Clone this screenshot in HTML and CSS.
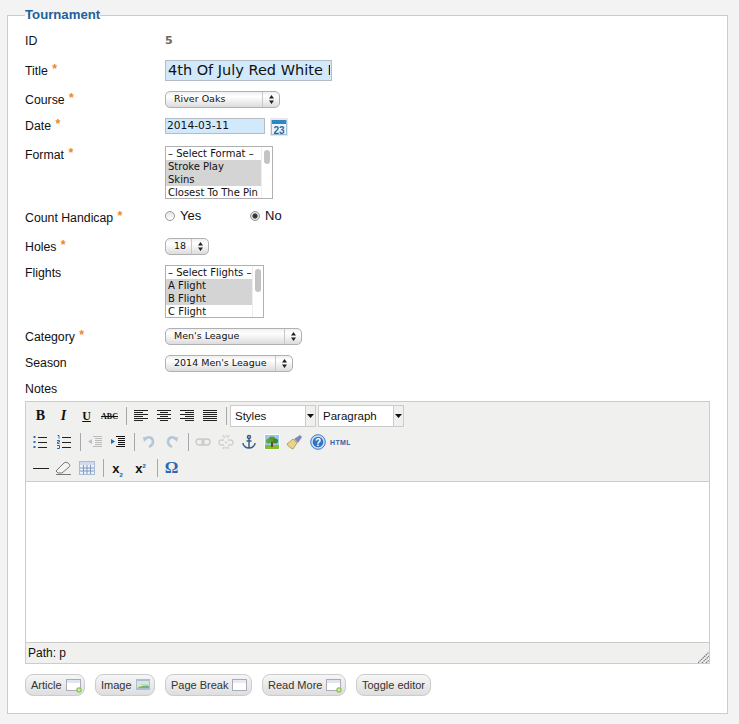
FILE: index.html
```html
<!DOCTYPE html>
<html lang="en">
<head>
<meta charset="utf-8">
<title>Tournament</title>
<link rel="stylesheet" href="styles.css">
</head>
<body>
<svg class="defs" width="0" height="0" aria-hidden="true">
  <symbol id="alignl" viewBox="0 0 16 16"><path d="M1 2.500h14M1 4.500h9M1 6.500h14M1 8.500h9M1 10.500h14M1 12.500h9" stroke="#222" fill="none" stroke-width="1"/></symbol>
  <symbol id="alignc" viewBox="0 0 16 16"><path d="M1 2.500h14M4 4.500h8M1 6.500h14M4 8.500h8M1 10.500h14M4 12.500h8" stroke="#222" fill="none"/></symbol>
  <symbol id="alignr" viewBox="0 0 16 16"><path d="M1 2.500h14M6 4.500h9M1 6.500h14M6 8.500h9M1 10.500h14M6 12.500h9" stroke="#222" fill="none"/></symbol>
  <symbol id="alignf" viewBox="0 0 16 16"><path d="M1 2.500h14M1 4.500h14M1 6.500h14M1 8.500h14M1 10.500h14M1 12.500h14" stroke="#222" fill="none"/></symbol>
  <symbol id="arrow" viewBox="0 0 7 4"><path d="M0 0h7L3.500 4z" fill="#111"/></symbol>
  <symbol id="updown" viewBox="0 0 7 11"><path d="M3.500 1L6 4.500H1zM3.500 10L1 6.500h5z" fill="#222"/></symbol>
  <symbol id="doc" viewBox="0 0 16 16"><rect x=".5" y="2.500" width="14" height="11" fill="#fff" stroke="#aab"/><rect x="1" y="3" width="13" height="3" fill="#dfe6f2"/><circle cx="13" cy="13" r="2.700" fill="#8cc152"/><path d="M11.500 13h3M13 11.500v3" stroke="#e8f5d8"/></symbol>
</svg>

<fieldset class="panel">
  <legend class="panel-title">Tournament</legend>
  <div class="form">
    <div class="label">ID</div>
    <div class="value-id">5</div>

    <div class="label label-title">Title <span class="req">*</span></div>
    <div class="field"><div class="input input-title"><span class="input-title-text">4th Of July Red White Blue</span></div></div>

    <div class="label">Course <span class="req">*</span></div>
    <div class="field"><div class="select select-course"><span class="select-text">River Oaks</span><span class="select-btn"><svg width="7" height="11"><use href="#updown"/></svg></span></div></div>

    <div class="label label-flush">Date <span class="req">*</span></div>
    <div class="field date-field">
      <div class="input input-date">2014-03-11</div>
      <svg class="calendar" width="18" height="18" viewBox="0 0 18 18">
        <rect width="18" height="18" fill="#e8e8e8"/>
        <rect x="1.500" y="2.500" width="15" height="14" fill="#eef5fb" stroke="#9dbdd6"/>
        <rect x="2" y="2" width="14" height="4" fill="#2f86c4"/>
        <text x="9" y="15.500" class="calendar-text">23</text>
      </svg>
    </div>

    <div class="label">Format <span class="req">*</span></div>
    <div class="field">
      <div class="list list-format">
        <div class="options">
          <div class="opt">&#8211; Select Format &#8211;</div>
          <div class="opt opt-on">Stroke Play</div>
          <div class="opt opt-on">Skins</div>
          <div class="opt">Closest To The Pin</div>
        </div>
        <div class="scroll"><span class="thumb thumb-format"></span></div>
      </div>
    </div>

    <div class="label">Count Handicap <span class="req">*</span></div>
    <div class="field radios">
      <span class="radio-item radio-yes"><span class="radio"></span>Yes</span>
      <span class="radio-item"><span class="radio radio-on"></span>No</span>
    </div>

    <div class="label">Holes <span class="req">*</span></div>
    <div class="field"><div class="select select-holes"><span class="select-text select-text-holes">18</span><span class="select-btn"><svg width="7" height="11"><use href="#updown"/></svg></span></div></div>

    <div class="label label-flush">Flights</div>
    <div class="field">
      <div class="list list-flights">
        <div class="options">
          <div class="opt">&#8211; Select Flights &#8211;</div>
          <div class="opt opt-on">A Flight</div>
          <div class="opt opt-on">B Flight</div>
          <div class="opt">C Flight</div>
        </div>
        <div class="scroll"><span class="thumb thumb-flights"></span></div>
      </div>
    </div>

    <div class="label">Category <span class="req">*</span></div>
    <div class="field"><div class="select select-category"><span class="select-text">Men's League</span><span class="select-btn"><svg width="7" height="11"><use href="#updown"/></svg></span></div></div>

    <div class="label label-flush">Season</div>
    <div class="field"><div class="select select-season"><span class="select-text">2014 Men's League</span><span class="select-btn"><svg width="7" height="11"><use href="#updown"/></svg></span></div></div>

    <div class="label label-flush label-wide">Notes</div>
  </div>

  <div class="editor">
    <div class="toolbar">
      <div class="tb-row">
        <span class="tb"><b class="g g-b">B</b></span>
        <span class="tb"><b class="g g-i">I</b></span>
        <span class="tb"><b class="g g-u">U</b></span>
        <span class="tb"><span class="g g-abc">ABC</span></span>
        <span class="sep"></span>
        <span class="tb"><svg width="16" height="16"><use href="#alignl"/></svg></span>
        <span class="tb"><svg width="16" height="16"><use href="#alignc"/></svg></span>
        <span class="tb"><svg width="16" height="16"><use href="#alignr"/></svg></span>
        <span class="tb"><svg width="16" height="16"><use href="#alignf"/></svg></span>
        <span class="sep"></span>
        <div class="combo combo-first"><span class="combo-text">Styles</span><span class="combo-btn"><svg width="7" height="4"><use href="#arrow"/></svg></span></div>
        <div class="combo"><span class="combo-text">Paragraph</span><span class="combo-btn"><svg width="7" height="4"><use href="#arrow"/></svg></span></div>
      </div>
      <div class="tb-row">
        <span class="tb"><svg width="16" height="16" viewBox="0 0 16 16"><path d="M1.500 2v2M1.500 7v2M1.500 12v2" stroke="#2a6db5" stroke-width="2"/><path d="M5 3.500h9M5 8.500h9M5 13.500h9" stroke="#222"/></svg></span>
        <span class="tb"><svg width="16" height="16" viewBox="0 0 16 16"><path d="M1.500 1.500h1.500v3M1 6.500h2.500v1.500H1.500v1.500h2M1 11.500h2.500v3H1" stroke="#2a6db5" fill="none"/><path d="M6 3.500h9M6 8.500h9M6 13.500h9" stroke="#222"/></svg></span>
        <span class="sep"></span>
        <span class="tb"><svg width="16" height="16" viewBox="0 0 16 16"><path d="M6 2.500h9M8 4.500h7M8 6.500h7M8 8.500h7M8 10.500h7M6 12.500h9" stroke="#bbb"/><path d="M5 5v5L1 7.500z" fill="#a9c3dc"/></svg></span>
        <span class="tb"><svg width="16" height="16" viewBox="0 0 16 16"><path d="M6 2.500h9M8 4.500h7M8 6.500h7M8 8.500h7M8 10.500h7M6 12.500h9" stroke="#111"/><path d="M1 5v5l4-2.500z" fill="#1f6fb5"/></svg></span>
        <span class="sep"></span>
        <span class="tb"><svg width="16" height="16" viewBox="0 0 16 16"><path d="M4 5c3-3 8-2 8 3 0 2-2 4-4 5" stroke="#b4c6d8" stroke-width="2.500" fill="none"/><path d="M2 3l5 1-4 4z" fill="#b4c6d8"/></svg></span>
        <span class="tb"><svg width="16" height="16" viewBox="0 0 16 16"><path d="M12 5C9 2 4 3 4 8c0 2 2 4 4 5" stroke="#b4c6d8" stroke-width="2.500" fill="none"/><path d="M14 3l-5 1 4 4z" fill="#b4c6d8"/></svg></span>
        <span class="sep"></span>
        <span class="tb"><svg width="16" height="16" viewBox="0 0 16 16"><g stroke="#c8c8c8" stroke-width="1.300" fill="none"><rect x="1" y="5" width="8" height="6" rx="3"/><rect x="7" y="5" width="8" height="6" rx="3"/></g></svg></span>
        <span class="tb"><svg width="16" height="16" viewBox="0 0 16 16"><g stroke="#cfcfcf" stroke-width="1.300" fill="none"><path d="M6 6H3.500a2.500 2.500 0 000 5H6M10 6h2.500a2.500 2.500 0 010 5H10M7 8.500h2"/><path d="M5 1l1.500 3M11 1L9.500 4M5 15l1.500-2.500M11 15l-1.500-2.500M8 1v2M8 13v2"/></g></svg></span>
        <span class="tb"><svg width="16" height="16" viewBox="0 0 16 16"><g stroke="#3a5f86" fill="none" stroke-width="1.500"><circle cx="8" cy="3" r="1.500"/><path d="M8 4.500V14M5.500 7h5M2 9c0 3 3 5 6 5s6-2 6-5"/></g></svg></span>
        <span class="tb"><svg width="16" height="16" viewBox="0 0 16 16"><rect width="16" height="16" fill="#fff"/><rect x="1" y="1" width="14" height="10" fill="#9ec8ea"/><rect x="1" y="11" width="14" height="4" fill="#7dc02c"/><circle cx="8" cy="6" r="3.500" fill="#4f9a36"/><circle cx="4.500" cy="7" r="2.500" fill="#5aa83a"/><circle cx="11.500" cy="7" r="2.500" fill="#3c8a2c"/><rect x="7" y="8" width="2" height="5" fill="#6b4a1f"/></svg></span>
        <span class="tb"><svg width="17" height="16" viewBox="0 0 17 16"><path d="M1 10l6-5 4 4-4 6c-3-1-5-3-6-5z" fill="#e8d48c" stroke="#a89050" stroke-width=".8"/><path d="M8 5l6-4 2 2-4 6z" fill="#7f88b8"/></svg></span>
        <span class="tb"><svg width="16" height="16" viewBox="0 0 16 16"><circle cx="8" cy="8" r="7.300" fill="#cfe0f5" stroke="#3c78c4"/><circle cx="8" cy="8" r="5.300" fill="#2f74c8"/><text x="8" y="11.500" class="help-text">?</text></svg></span>
        <span class="tb"><span class="g g-html">HTML</span></span>
      </div>
      <div class="tb-row">
        <span class="tb"><svg width="16" height="16" viewBox="0 0 16 16"><path d="M0 8.500h16" stroke="#222"/></svg></span>
        <span class="tb"><svg width="17" height="16" viewBox="0 0 17 16"><path d="M1 11l8-8c1-1 3-1 4 0l1 1c1 1 1 2 0 3l-7 6H3z" fill="#f4f4f4" stroke="#777"/><path d="M1 14.500h15" stroke="#777"/></svg></span>
        <span class="tb"><svg width="16" height="16" viewBox="0 0 16 16"><rect x=".5" y="1.500" width="15" height="13" fill="#eef3fb" stroke="#a8bcd6"/><rect x="1" y="2" width="14" height="3" fill="#cfdcee"/><path d="M1 8h14M1 11h14M4.500 5v9M8 5v9M11.500 5v9" stroke="#7f98bc"/></svg></span>
        <span class="sep"></span>
        <span class="tb"><span class="g g-sub">x<sub class="sc">2</sub></span></span>
        <span class="tb"><span class="g g-sub">x<sup class="sc">2</sup></span></span>
        <span class="sep"></span>
        <span class="tb"><span class="g g-omega">&#937;</span></span>
      </div>
    </div>
    <div class="edit-area"></div>
    <div class="statusbar">
      <span>Path: p</span>
      <svg class="grip" width="11" height="11" viewBox="0 0 11 11"><path d="M0 11L11 0M4 11l7-7M8 11l3-3" stroke="#777" stroke-width="1.200" stroke-dasharray="1.500 .7"/></svg>
    </div>
  </div>

  <div class="actions">
    <a class="btn btn-article">Article <svg class="btn-icon" width="16" height="16"><use href="#doc"/></svg></a>
    <a class="btn btn-image">Image <svg class="btn-icon" width="16" height="16" viewBox="0 0 16 16"><rect y="2" width="14" height="11" fill="#a9bfd2"/><rect x="1" y="4" width="12" height="7" fill="#cfe6f4"/><path d="M1 11l5-4 7 1v3z" fill="#6fb28f"/><path d="M1 9c4-2 8-2 12-1v1C9 8 5 9 1 11z" fill="#f1e48c"/></svg></a>
    <a class="btn btn-break">Page Break <svg class="btn-icon" width="16" height="16" viewBox="0 0 16 16"><rect x=".5" y="2.500" width="14" height="11" fill="#fff" stroke="#aab"/><rect x="1" y="3" width="13" height="3" fill="#e6ebf3"/></svg></a>
    <a class="btn btn-more">Read More <svg class="btn-icon" width="16" height="16"><use href="#doc"/></svg></a>
    <a class="btn btn-toggle">Toggle editor</a>
  </div>
</fieldset>
</body>
</html>
```
FILE: styles.css
```css
* { box-sizing: border-box; }
html, body { margin: 0; padding: 0; }
body {
  background: #f3f3f3;
  font-family: "Liberation Sans", Arial, sans-serif;
  font-size: 12px;
  color: #111;
  height: 724px;
  overflow: hidden;
}
.defs { position: absolute; }
.panel {
  margin: 8px 0 0 7px;
  width: 721px;
  height: 706px;
  min-width: 0;
  padding: 0 17px 0 17px;
  border: 1px solid #ccc;
  background: #fff;
}
.panel-title {
  padding: 0;
  margin: 0;
  font-size: 13.200px;
  line-height: 14px;
  font-weight: bold;
  color: #1f6199;
}
.form {
  padding-top: 10px;
  display: grid;
  grid-template-columns: 140px 1fr;
  grid-template-rows: 28px 31px 27px 28px 63px 29px 27px 63px 27px 26px 20px;
}
.label { padding-top: 2px; line-height: 14px; font-size: 12.300px; }
.label-title { padding-top: 4px; }
.label-flush { padding-top: 1px; }
.label-wide { grid-column: 1 / 3; }
.req { color: #f0852a; font-weight: bold; margin-left: 1px; position: relative; top: -2px; }
.value-id {
  font-family: "DejaVu Sans", sans-serif;
  font-size: 11px;
  font-weight: bold;
  color: #666;
  padding-top: 2px;
  line-height: 14px;
}
.input {
  border: 1px solid #b5bcc4;
  background: #d2e9fc;
  overflow: hidden;
  white-space: nowrap;
  font-family: "DejaVu Sans", sans-serif;
  color: #111;
}
.input-title { width: 167px; height: 21px; font-size: 14.500px; line-height: 19px; padding-left: 2px; }
.input-title-text { display: block; width: 162px; overflow: hidden; }
.input-date { width: 100px; height: 16px; font-size: 10.700px; line-height: 14px; padding-left: 1px; }
.date-field { display: flex; gap: 5px; align-items: flex-start; }
.calendar-text { font: bold 10px "Liberation Sans", sans-serif; fill: #1e6aa8; text-anchor: middle; }
.help-text { font: bold 10px "Liberation Sans", sans-serif; fill: #fff; text-anchor: middle; }
.select {
  height: 17px;
  display: flex;
  justify-content: space-between;
  border: 1px solid #b0b0b0;
  border-radius: 5px;
  background: linear-gradient(#efefef, #fff 30%, #dcdcdc);
  font-family: "DejaVu Sans", sans-serif;
  font-size: 9.500px;
  line-height: 14px;
}
.select-text { padding-left: 8px; }
.select-text-holes { padding-left: 8px; }
.select-btn { width: 17px; border-left: 1px solid #c8c8c8; display: flex; align-items: center; justify-content: center; flex: none; }
.select-course { width: 115px; }
.select-holes { width: 44px; }
.select-category { width: 137px; }
.select-season { width: 128px; }
.list {
  height: 53px;
  display: flex;
  border: 1px solid #b0b0b0;
  background: #fff;
  font-family: "DejaVu Sans", sans-serif;
  font-size: 10px;
  line-height: 13px;
  overflow: hidden;
}
.list-format { width: 108px; }
.list-flights { width: 99px; }
.options { flex: 1; min-width: 0; }
.opt { height: 13px; padding-left: 2px; white-space: nowrap; }
.opt-on { background: #d4d4d4; }
.scroll { width: 11px; flex: none; border-left: 1px solid #eee; padding: 3px 2px; }
.thumb { display: block; width: 6px; background: #c4c4c4; border-radius: 3px; }
.thumb-format { height: 14px; }
.thumb-flights { height: 23px; }
.radios { display: flex; line-height: 13px; font-size: 13px; }
.radio-item { display: flex; align-items: center; gap: 5px; height: 13px; }
.radio-yes { width: 85px; }
.radio {
  width: 10px;
  height: 10px;
  border-radius: 50%;
  border: 1px solid #999;
  background: linear-gradient(#e4e4e4, #fff);
}
.radio-on { background: radial-gradient(circle, #333 0 2px, #ddd 3px); }
.editor { border: 1px solid #ccc; width: 685px; height: 263px; display: flex; flex-direction: column; }
.toolbar { height: 80px; background: #f0f0ee; padding: 2px 3px 0; border-bottom: 1px solid #ccc; flex: none; }
.tb-row { display: flex; align-items: center; height: 26px; }
.tb-row:first-child { height: 24px; margin-bottom: 1px; }
.tb { width: 23px; height: 20px; display: flex; align-items: center; justify-content: center; flex: none; }
.sep { width: 1px; height: 18px; background: #a8a8a8; margin: 0 2px 0 5px; flex: none; }
.g { color: #111; line-height: 1; }
.g-b { font: bold 14px "Liberation Serif", serif; }
.g-i { font: italic bold 14px "Liberation Serif", serif; }
.g-u { font: bold 12px "Liberation Serif", serif; text-decoration: underline; }
.g-abc { font: bold 8px "Liberation Serif", serif; text-decoration: line-through; }
.g-html { font: bold 7px "Liberation Sans", sans-serif; color: #3a5fa8; letter-spacing: .4px; }
.g-sub { font: bold 13px "Liberation Sans", sans-serif; }
.sc { font-size: 6px; line-height: 0; color: #1f5a9a; }
.g-omega { font: bold 17px "Liberation Serif", serif; color: #2a68b0; }
.combo {
  width: 86px;
  height: 22px;
  display: flex;
  border: 1px solid #ccc;
  background: #fff;
  font-size: 11.500px;
  flex: none;
  margin-left: 2px;
}
.combo-first { margin-left: 1px; }
.combo-text { flex: 1; padding-left: 4px; line-height: 20px; }
.combo-btn { width: 10px; border-left: 1px solid #ccc; background: #f0f0ee; display: flex; align-items: center; justify-content: center; }
.edit-area { flex: 1; background: #fff; }
.statusbar {
  height: 21px;
  flex: none;
  background: #f0f0ee;
  border-top: 1px solid #ccc;
  padding-left: 2px;
  line-height: 20px;
  display: flex;
  justify-content: space-between;
  align-items: flex-end;
}
.grip { display: block; }
.actions { display: flex; gap: 10px; margin-top: 10px; }
.btn {
  height: 22px;
  display: flex;
  align-items: center;
  gap: 4px;
  padding-left: 5px;
  border: 1px solid #ccc;
  border-radius: 8px;
  background: linear-gradient(#f6f6f6, #dedede);
  font-size: 11px;
  color: #333;
  white-space: nowrap;
}
.btn-article { width: 60px; }
.btn-image { width: 60px; }
.btn-break { width: 87px; }
.btn-more { width: 84px; }
.btn-toggle { width: 75px; }
.btn-icon { flex: none; }
```
